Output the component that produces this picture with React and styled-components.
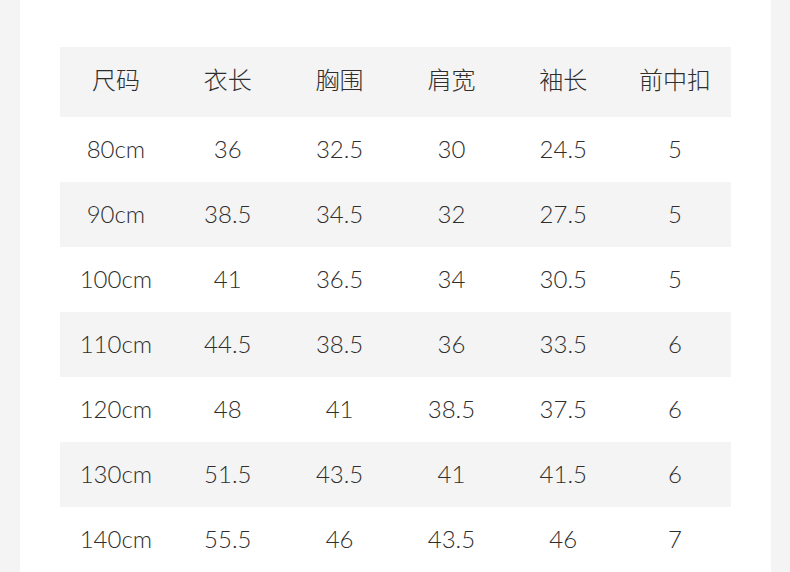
import React from 'react'
import styled, { createGlobalStyle } from 'styled-components'

const headers = ['尺码', '衣长', '胸围', '肩宽', '袖长', '前中扣']

const rows = [
  ['80cm', '36', '32.5', '30', '24.5', '5'],
  ['90cm', '38.5', '34.5', '32', '27.5', '5'],
  ['100cm', '41', '36.5', '34', '30.5', '5'],
  ['110cm', '44.5', '38.5', '36', '33.5', '6'],
  ['120cm', '48', '41', '38.5', '37.5', '6'],
  ['130cm', '51.5', '43.5', '41', '41.5', '6'],
  ['140cm', '55.5', '46', '43.5', '46', '7'],
]

const GlobalStyle = createGlobalStyle`
  html, body {
    margin: 0;
    padding: 0;
    background: #f4f4f4;
    height: 572px;
    overflow: hidden;
  }
`

const Page = styled.div`
  width: 751px;
  height: 572px;
  margin-left: 20px;
  background: #fff;
  padding: 47px 40px 0;
  box-sizing: border-box;
  color: #2e2e2e;
`

const Table = styled.div`
  display: grid;
  grid-template-columns: repeat(6, 1fr);
  grid-template-rows: 70px;
  grid-auto-rows: 65px;
`

const Row = styled.div`
  display: contents;
`

const Cell = styled.div`
  display: flex;
  align-items: center;
  justify-content: center;
  background: ${p => (p.$shaded ? '#f4f4f4' : '#fff')};
  font-size: 24px;
  font-weight: 300;
  font-family: ${p => (p.$head ? '"Noto Sans CJK SC", sans-serif' : 'Lato, sans-serif')};
  padding-bottom: ${p => (p.$head ? '8px' : '3px')};
`

export default function App() {
  return (
    <>
      <GlobalStyle />
      <Page>
        <Table>
          <Row>
            {headers.map(h => (
              <Cell key={h} $head $shaded>{h}</Cell>
            ))}
          </Row>
          {rows.map((r, i) => (
            <Row key={r[0]}>
              {r.map((v, j) => (
                <Cell key={j} $shaded={i % 2 === 1}>{v}</Cell>
              ))}
            </Row>
          ))}
        </Table>
      </Page>
    </>
  )
}
